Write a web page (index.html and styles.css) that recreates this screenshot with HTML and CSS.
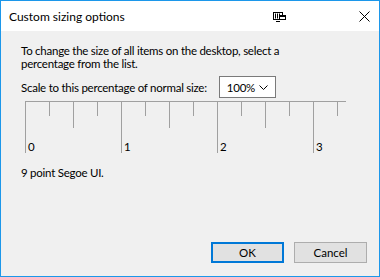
FILE: index.html
```html
<!DOCTYPE html>
<html>
<head>
<meta charset="utf-8">
<link rel="stylesheet" href="styles.css">
</head>
<body>
<div class="window">
  <div class="titlebar">
    <span class="title">Custom sizing options</span>
    <svg class="ticon" width="13" height="10" viewBox="0 0 13 10">
      <rect x="0.5" y="0.5" width="9" height="7" fill="none" stroke="#000"/>
      <path d="M2.5 1.5V6.5M4.5 1.5V6.5M6.5 1.5V6.5" stroke="#000"/>
      <path d="M3 9.5H7" stroke="#000"/>
      <rect x="6.5" y="3.5" width="6" height="4" fill="#fff" stroke="#000"/>
      <rect x="7" y="4" width="5" height="1" fill="#000"/>
    </svg>
    <svg class="close" width="11" height="11" viewBox="0 0 11 11">
      <path d="M0.5 0.5L10.5 10.5M10.5 0.5L0.5 10.5" stroke="#000" stroke-width="1"/>
    </svg>
  </div>
  <div class="content">
    <p class="desc">To change the size of all items on the desktop, select a percentage from the list.</p>
    <div class="scale-row">
      <span>Scale to this percentage of normal size:</span>
      <div class="select"><span>100%</span>
        <svg width="9" height="5" viewBox="0 0 9 5"><path d="M0.5 0.5L4.5 4.5L8.5 0.5" fill="none" stroke="#000" stroke-width="1"/></svg>
      </div>
    </div>
    <div class="ruler">
      <div class="tick long"><span>0</span></div>
      <div class="tick short"></div>
      <div class="tick mid"></div>
      <div class="tick short"></div>
      <div class="tick long"><span>1</span></div>
      <div class="tick short"></div>
      <div class="tick mid"></div>
      <div class="tick short"></div>
      <div class="tick long"><span>2</span></div>
      <div class="tick short"></div>
      <div class="tick mid"></div>
      <div class="tick short"></div>
      <div class="tick long"><span>3</span></div>
      <div class="tick short last"></div>
    </div>
    <p class="sample">9 point Segoe UI.</p>
  </div>
  <div class="footer">
    <button class="btn default">OK</button>
    <button class="btn">Cancel</button>
  </div>
</div>
</body>
</html>
```
FILE: styles.css
```css
html, body {
  margin: 0;
  padding: 0;
  width: 380px;
  height: 277px;
  overflow: hidden;
  background: #f0f0f0;
}
.window {
  box-sizing: border-box;
  width: 380px;
  height: 277px;
  border: 1px solid #1c97ea;
  display: flex;
  flex-direction: column;
  background: #f0f0f0;
  font-family: Lato, "Liberation Sans", sans-serif;
  font-size: 11.5px;
  letter-spacing: -0.25px;
  color: #000;
}
.titlebar {
  height: 30px;
  background: #fff;
  display: flex;
  align-items: center;
  padding-left: 8px;
  flex-shrink: 0;
}
.title {
  font-size: 12px;
  letter-spacing: 0;
  flex: 1;
  margin-top: 1px;
}
.ticon {
  margin-right: 73px;
  margin-top: 1px;
}
.close {
  margin-right: 9px;
}
.content {
  flex: 1;
  padding: 13px 0 0 20px;
}
.desc {
  margin: 0;
  line-height: 13px;
  width: 300px;
}
.scale-row {
  display: flex;
  align-items: center;
  margin-top: 6px;
  gap: 12px;
}
.select {
  box-sizing: border-box;
  width: 57px;
  height: 22px;
  border: 1px solid #7a7a7a;
  background: #fff;
  display: flex;
  align-items: center;
  justify-content: space-between;
  padding: 0 7px 0 7px;
}
.select svg { margin-top: 1px; }
.ruler {
  display: flex;
  margin: 3px 0 0 4px;
  width: 321px;
  border-top: 1px solid #a0a0a0;
}
.tick {
  width: 24px;
  border-left: 1px solid #a0a0a0;
  box-sizing: border-box;
}
.tick.last { width: 9px; }
.short { height: 14px; align-self: flex-start; }
.mid { height: 26px; align-self: flex-start; }
.long { height: 51px; align-self: flex-start; display: flex; align-items: flex-end; }
.long span {
  padding-left: 2px;
  line-height: 12px;
}
.sample {
  margin: 13px 0 0 0;
}
.footer {
  display: flex;
  justify-content: flex-end;
  gap: 10px;
  padding: 0 12px 13px 0;
}
.btn {
  box-sizing: border-box;
  width: 73px;
  height: 21px;
  font-family: Lato, "Liberation Sans", sans-serif;
  font-size: 11.5px;
  color: #000;
  background: #e1e1e1;
  border: 1px solid #adadad;
  padding: 0;
  margin: 0;
}
.btn.default {
  border: 2px solid #0078d7;
}
```
